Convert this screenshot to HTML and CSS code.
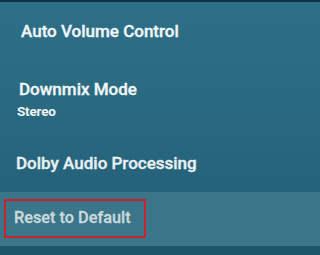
FILE: index.html
```html
<!DOCTYPE html>
<html>
<head>
<meta charset="utf-8">
<link rel="stylesheet" href="styles.css">
</head>
<body>
<div class="screen">
  <div class="topbar"></div>
  <div class="item item-auto">Auto Volume Control</div>
  <div class="item item-downmix">Downmix Mode</div>
  <div class="sub">Stereo</div>
  <div class="item item-dolby">Dolby Audio Processing</div>
  <div class="highlight">
    <div class="reset-box">Reset to Default</div>
  </div>
  <div class="bottom"></div>
</div>
</body>
</html>
```
FILE: styles.css
```css
html {
  margin: 0;
  padding: 0;
  background: #1d5569;
}
body {
  margin: 0;
  padding: 0;
  height: 255px;
  overflow: hidden;
  font-family: Roboto, "Liberation Sans", sans-serif;
}
.screen {
  height: 255px;
  background: linear-gradient(180deg, #2d6f87 0%, #2a6a81 40%, #24627a 75%, #21607a 100%);
  display: flex;
  flex-direction: column;
}
.topbar {
  height: 2px;
  background: #0f3346;
}
.item {
  font-size: 17px;
  font-weight: 500;
  line-height: 20px;
  color: #f2f6f7;
  white-space: nowrap;
  -webkit-text-stroke: 0.35px currentColor;
}
.item-auto {
  margin-top: 19px;
  padding-left: 21px;
}
.item-downmix {
  margin-top: 38px;
  padding-left: 19px;
}
.sub {
  margin-top: 4px;
  padding-left: 17px;
  font-size: 13.5px;
  font-weight: 700;
  line-height: 16px;
  color: #eef3f4;
  letter-spacing: -0.2px;
}
.item-dolby {
  margin-top: 34px;
  padding-left: 16px;
  color: #eaf0f2;
}
.highlight {
  margin-top: 19px;
  height: 54px;
  background: #3a7589;
  padding-top: 7px;
  box-sizing: border-box;
  padding-left: 4px;
}
.reset-box {
  width: 142px;
  height: 39px;
  box-sizing: border-box;
  border: 2px solid #c8222c;
  padding: 7px 0 0 8px;
  font-size: 16.3px;
  font-weight: 500;
  line-height: 20px;
  color: #cbd9dd;
  white-space: nowrap;
  -webkit-text-stroke: 0.3px currentColor;
}
.bottom {
  flex: 1;
  background: #1d5569;
}
```
